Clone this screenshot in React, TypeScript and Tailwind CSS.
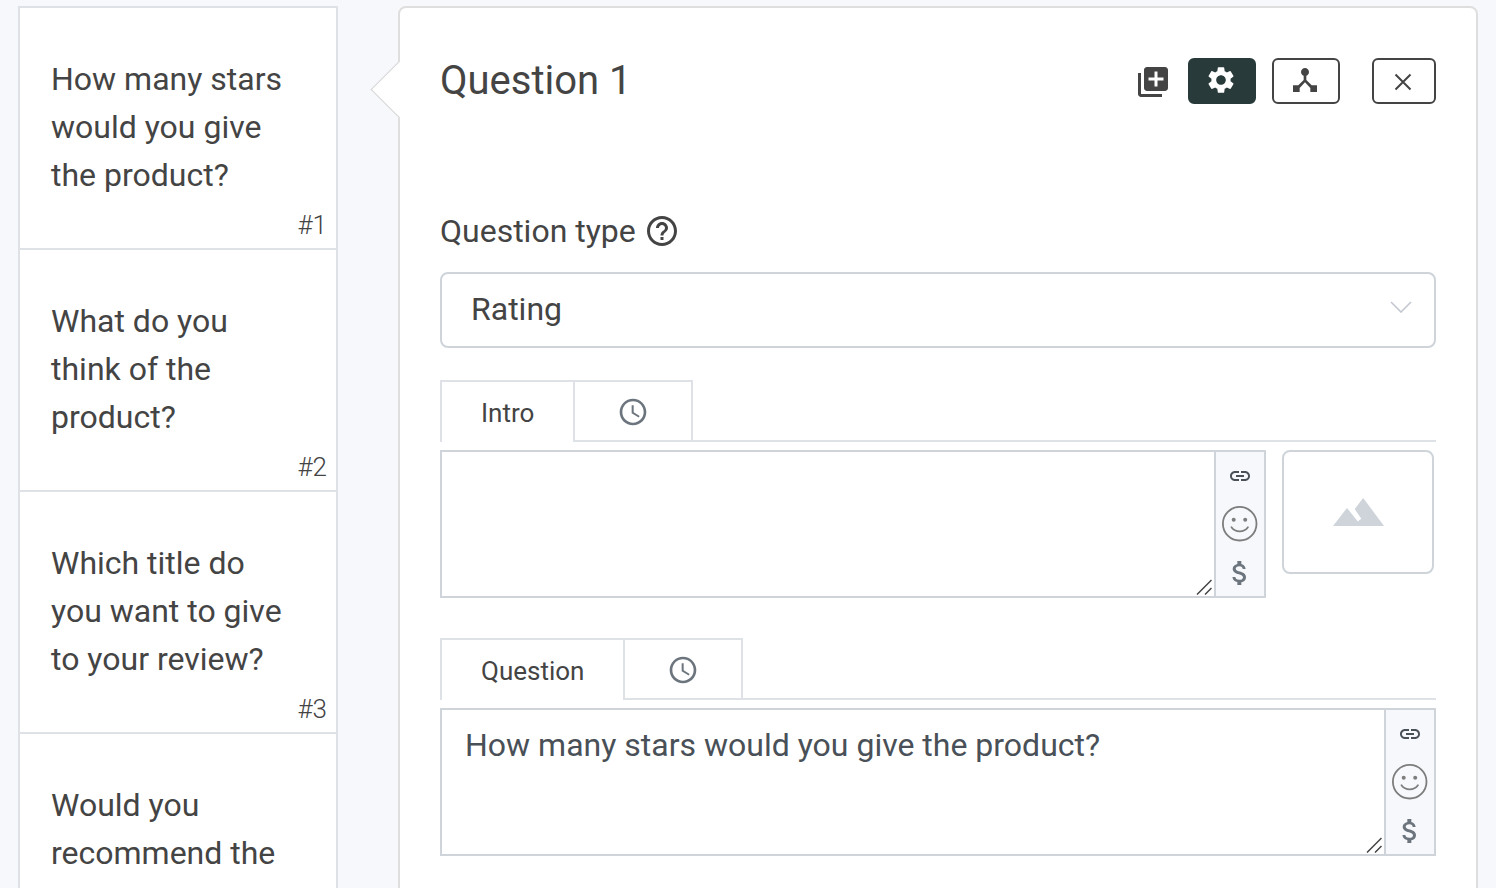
import type { ReactNode } from 'react';
import {
  MdAccessTime,
  MdAttachMoney,
  MdDeviceHub,
  MdHelpOutline,
  MdLibraryAdd,
  MdLink,
  MdSettings,
} from 'react-icons/md';

const questions = [
  'How many stars would you give the product?',
  'What do you think of the product?',
  'Which title do you want to give to your review?',
  'Would you recommend the product?',
];

function SmileIcon() {
  return (
    <svg viewBox="0 0 36 36" className="size-9" fill="none" stroke="#7d7d7d" strokeWidth="1.8" aria-hidden="true">
      <circle cx="17.700" cy="17.700" r="16.8" />
      <path d="M9.500 21.300c1.8 2.600 4.800 4.100 8.200 4.100s6.400-1.500 8.200-4.100" strokeLinecap="round" />
      <circle cx="11.700" cy="13.800" r="2" fill="#7d7d7d" stroke="none" />
      <circle cx="23.200" cy="13.800" r="2" fill="#7d7d7d" stroke="none" />
    </svg>
  );
}

function Tabs({ label }: { label: string }) {
  return (
    <div role="tablist" className="flex h-[62px]">
      <button
        type="button"
        role="tab"
        aria-selected="true"
        className="border-t-2 border-l-2 border-[#dee2e6] px-[39px] pt-[2px] text-[26px] leading-9"
      >
        {label}
      </button>
      <button
        type="button"
        role="tab"
        aria-selected="false"
        aria-label={`${label} delay`}
        className="flex w-[120px] items-center justify-center border-2 border-[#dee2e6] pt-[2px] text-[#6c757d]"
      >
        <MdAccessTime size={32} />
      </button>
      <div className="flex-1 border-b-2 border-[#dee2e6]" />
    </div>
  );
}

function Editor({ label, text }: { label: string; text: string }) {
  return (
    <div className="flex h-[148px] flex-1 border-2 border-[#ced4da]">
      <div className="relative flex flex-1">
        <textarea
          aria-label={label}
          defaultValue={text}
          className="flex-1 resize-none px-[23px] py-[11px] text-[32px] leading-[48px] text-[#495057] outline-none"
        />
        <svg
          viewBox="0 0 16 16"
          className="absolute right-[2px] bottom-[1px] size-4"
          stroke="#444"
          strokeWidth="1.500"
          aria-hidden="true"
        >
          <path d="M1 15.500 15.500 1M9 15.500 15.500 9" />
        </svg>
      </div>
      <div className="flex w-[50px] flex-col items-center border-l-2 border-[#ced4da] bg-[#f7f8fc] text-[#6c757d]">
        <button type="button" aria-label="Insert link" className="flex h-12 items-center text-[#495057]">
          <MdLink size={24} />
        </button>
        <button type="button" aria-label="Insert emoji" className="flex h-12 items-center">
          <SmileIcon />
        </button>
        <button type="button" aria-label="Insert variable" className="flex h-12 items-center pt-[2px]">
          <MdAttachMoney size={32} />
        </button>
      </div>
    </div>
  );
}

function HeaderButton({ label, className, children }: { label: string; className: string; children: ReactNode }) {
  return (
    <button
      type="button"
      aria-label={label}
      className={`flex h-[46px] items-center justify-center rounded-md border-2 ${className}`}
    >
      {children}
    </button>
  );
}

export default function App() {
  return (
    <div className="flex h-screen items-start overflow-hidden bg-[#f7f8fc] px-[18px] pt-[6px] font-[Roboto,sans-serif] text-[#444]">
      <nav aria-label="Questions" className="w-80 shrink-0 border-2 border-[#dee2e6] bg-white">
        <ol>
          {questions.map((question, index) => (
            <li key={question} className="relative border-b-2 border-[#dee2e6]">
              <a
                href={`#question-${index + 1}`}
                className="block pt-[47px] pr-10 pb-[49px] pl-[31px] text-[32px] leading-[48px]"
              >
                {question}
              </a>
              <span className="absolute right-[9px] bottom-[4px] text-[26px] leading-[38px] font-light">
                #{index + 1}
              </span>
            </li>
          ))}
        </ol>
      </nav>

      <main className="relative ml-[60px] min-h-screen flex-1 rounded-lg border-2 border-[#dedede] bg-white px-10 pt-[50px] pb-10">
        <div className="absolute top-[61px] -left-[21px] size-[41px] rotate-45 border-b border-l border-[#d4d4d4] bg-white" />
        <header className="relative flex items-center">
          <h1 className="flex-1 text-[40px] leading-[46px]">Question 1</h1>
          <button type="button" aria-label="Duplicate question" className="mr-[17px] pt-[2px]">
            <MdLibraryAdd size={36} />
          </button>
          <HeaderButton label="Settings" className="w-[68px] border-[#283b3a] bg-[#283b3a] pr-[2px] pb-[2px] text-white">
            <MdSettings size={32} />
          </HeaderButton>
          <HeaderButton label="Logic" className="ml-4 w-[68px] border-[#444] pr-[2px] pb-[2px]">
            <MdDeviceHub size={32} />
          </HeaderButton>
          <HeaderButton label="Close" className="ml-8 w-16 border-[#444] pt-[2px] pr-[2px]">
            <svg viewBox="0 0 18 18" className="size-[18px]" stroke="#444" strokeWidth="2" aria-hidden="true">
              <path d="M1.500 1.500l15 15M16.500 1.500l-15 15" />
            </svg>
          </HeaderButton>
        </header>

        <div className="mt-[103px] flex items-center gap-2 text-[32px] leading-[48px]">
          <label htmlFor="question-type">Question type</label>
          <MdHelpOutline size={36} />
        </div>
        <div className="relative mt-[17px]">
          <select
            id="question-type"
            className="h-[76px] w-full appearance-none rounded-lg border-2 border-[#ced4da] bg-white px-[29px] pb-[2px] text-[32px] leading-[48px]"
          >
            <option>Rating</option>
          </select>
          <svg
            viewBox="0 0 22 12"
            className="pointer-events-none absolute top-[29px] right-6 h-3 w-[22px]"
            fill="none"
            stroke="#c3c8d0"
            strokeWidth="1.600"
            aria-hidden="true"
          >
            <path d="M1 1l10 10L21 1" />
          </svg>
        </div>

        <section className="mt-8">
          <Tabs label="Intro" />
          <div className="mt-2 flex items-start gap-4 pr-[2px]">
            <Editor label="Intro" text="" />
            <button
              type="button"
              aria-label="Add image"
              className="flex h-[124px] w-[152px] items-center justify-center rounded-lg border-2 border-[#ced4da]"
            >
              <svg viewBox="-1 0 52 28" className="h-7 w-[52px]" fill="#ced4da" aria-hidden="true">
                <path d="M0 28 14 10l10.800 13.500 3.500-2.700-6.600-9.800L30.200 0 51 28z" />
              </svg>
            </button>
          </div>
        </section>

        <section className="mt-10">
          <Tabs label="Question" />
          <div className="mt-2 flex">
            <Editor label="Question" text="How many stars would you give the product?" />
          </div>
        </section>
      </main>
    </div>
  );
}
